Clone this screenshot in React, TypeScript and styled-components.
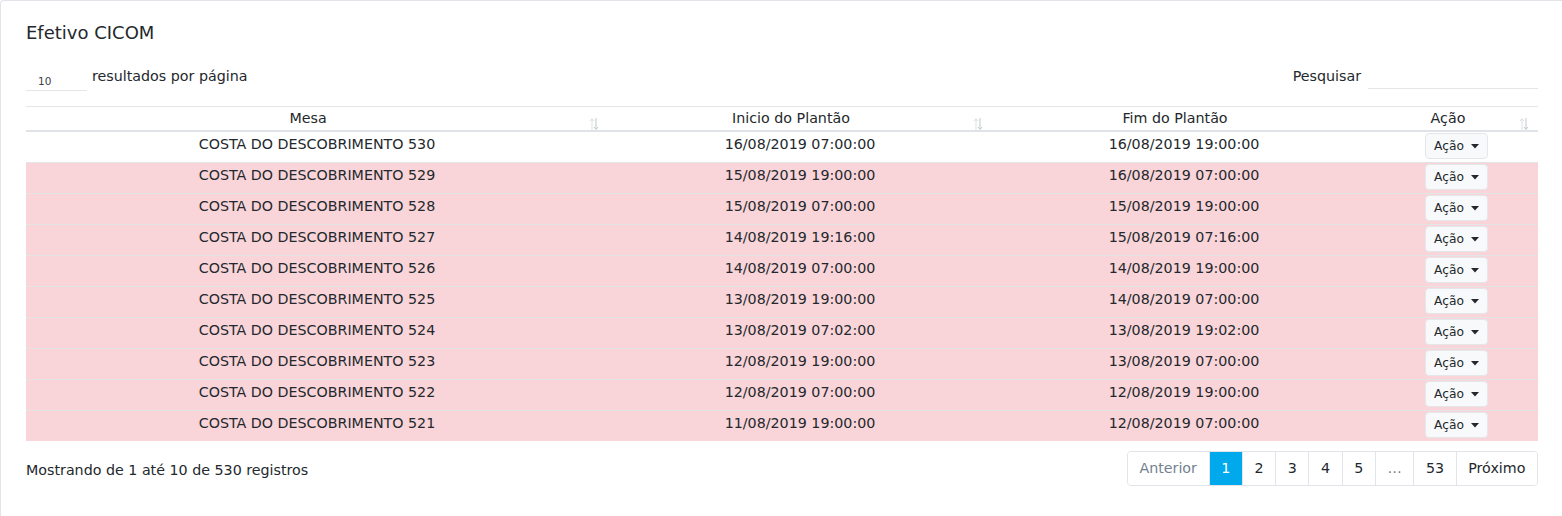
import React from "react"
import styled, { createGlobalStyle } from "styled-components"

const GlobalStyle = createGlobalStyle`
  html, body {
    margin: 0;
    padding: 0;
    background: #ffffff;
  }
  body {
    font-family: "DejaVu Sans", Verdana, sans-serif;
    font-size: 14.25px;
    color: #23282c;
  }
`

type Row = { mesa: string; inicio: string; fim: string }

const rows: Array<Row> = [
  { mesa: "COSTA DO DESCOBRIMENTO 530", inicio: "16/08/2019 07:00:00", fim: "16/08/2019 19:00:00" },
  { mesa: "COSTA DO DESCOBRIMENTO 529", inicio: "15/08/2019 19:00:00", fim: "16/08/2019 07:00:00" },
  { mesa: "COSTA DO DESCOBRIMENTO 528", inicio: "15/08/2019 07:00:00", fim: "15/08/2019 19:00:00" },
  { mesa: "COSTA DO DESCOBRIMENTO 527", inicio: "14/08/2019 19:16:00", fim: "15/08/2019 07:16:00" },
  { mesa: "COSTA DO DESCOBRIMENTO 526", inicio: "14/08/2019 07:00:00", fim: "14/08/2019 19:00:00" },
  { mesa: "COSTA DO DESCOBRIMENTO 525", inicio: "13/08/2019 19:00:00", fim: "14/08/2019 07:00:00" },
  { mesa: "COSTA DO DESCOBRIMENTO 524", inicio: "13/08/2019 07:02:00", fim: "13/08/2019 19:02:00" },
  { mesa: "COSTA DO DESCOBRIMENTO 523", inicio: "12/08/2019 19:00:00", fim: "13/08/2019 07:00:00" },
  { mesa: "COSTA DO DESCOBRIMENTO 522", inicio: "12/08/2019 07:00:00", fim: "12/08/2019 19:00:00" },
  { mesa: "COSTA DO DESCOBRIMENTO 521", inicio: "11/08/2019 19:00:00", fim: "12/08/2019 07:00:00" },
]

const headers = [
  { label: "Mesa", sort: true },
  { label: "Inicio do Plantão", sort: true },
  { label: "Fim do Plantão", sort: false },
  { label: "Ação", sort: true },
]

const pages = ["1", "2", "3", "4", "5", "…", "53"]

const SortIcon = () => (
  <SortSvg width="10" height="14" viewBox="0 0 10 14">
    <path d="M3 13V2M1 4l2-2.5L5 4" stroke="#dcdfe3" strokeWidth="1" fill="none" />
    <path d="M7 1v11M5 10l2 2.5L9 10" stroke="#c3c8cd" strokeWidth="1" fill="none" />
  </SortSvg>
)

const Caret = () => (
  <svg width="8" height="5" viewBox="0 0 8 5">
    <path d="M0 0h8L4 4.5z" fill="#23282c" />
  </svg>
)

export default function App() {
  return (
    <>
      <GlobalStyle />
      <Card>
        <Title>Efetivo CICOM</Title>
        <Controls>
          <LengthBox>
            <LengthSelect>10</LengthSelect>
            <span>resultados por página</span>
          </LengthBox>
          <SearchBox>
            <span>Pesquisar</span>
            <SearchInput />
          </SearchBox>
        </Controls>
        <Table>
          <colgroup>
            <col style={{ width: 582 }} />
            <col style={{ width: 384 }} />
            <col style={{ width: 384 }} />
            <col style={{ width: 162 }} />
          </colgroup>
          <thead>
            <tr>
              {headers.map((h) => (
                <HeadCell key={h.label}>
                  {h.label}
                  {h.sort && <SortIcon />}
                </HeadCell>
              ))}
            </tr>
          </thead>
          <tbody>
            {rows.map((r, i) => (
              <BodyRow key={r.mesa} $danger={i > 0}>
                <Cell>{r.mesa}</Cell>
                <Cell>{r.inicio}</Cell>
                <Cell>{r.fim}</Cell>
                <Cell>
                  <ActionButton>
                    Ação <Caret />
                  </ActionButton>
                </Cell>
              </BodyRow>
            ))}
          </tbody>
        </Table>
        <Footer>
          <Info>Mostrando de 1 até 10 de 530 registros</Info>
          <Pagination>
            <PageItem $muted>Anterior</PageItem>
            {pages.map((p) => (
              <PageItem key={p} $active={p === "1"} $muted={p === "…"}>
                {p}
              </PageItem>
            ))}
            <PageItem>Próximo</PageItem>
          </Pagination>
        </Footer>
      </Card>
    </>
  )
}

const Card = styled.div`
  border: 1px solid #e1e4e8;
  border-right: none;
  border-bottom: none;
  border-radius: 4px 0 0 0;
  padding: 18px 24px 40px 25px;
  min-height: 516px;
  box-sizing: border-box;
`
const Title = styled.div`
  font-size: 18px;
  line-height: 27px;
  margin-bottom: 15px;
`
const Controls = styled.div`
  display: flex;
  justify-content: space-between;
  align-items: flex-start;
  height: 45px;
`
const LengthBox = styled.div`
  display: flex;
  align-items: center;
  gap: 5px;
  line-height: 21px;
  padding-top: 1px;
`
const LengthSelect = styled.div`
  width: 61px;
  height: 29px;
  box-sizing: border-box;
  border-bottom: 1px solid #e4e7ea;
  font-size: 10.5px;
  padding: 9px 0 0 12px;
  color: #3a4248;
`
const SearchBox = styled.div`
  display: flex;
  align-items: flex-start;
  gap: 7px;
  line-height: 21px;
  padding-top: 5px;
`
const SearchInput = styled.div`
  width: 170px;
  height: 22px;
  border-bottom: 1px solid #e4e7ea;
`
const Table = styled.table`
  width: 100%;
  table-layout: fixed;
  border-collapse: collapse;
  text-align: center;
`
const HeadCell = styled.th`
  position: relative;
  font-weight: normal;
  line-height: 21px;
  padding: 1px 22px 1px 4px;
  border-top: 1px solid #e4e7ea;
  border-bottom: 2px solid #dfe2e6;
`
const SortSvg = styled.svg`
  position: absolute;
  right: 9px;
  bottom: -1px;
`
const BodyRow = styled.tr<{ $danger?: boolean }>`
  background: ${({ $danger }) => ($danger ? "#f9d5d9" : "#ffffff")};
  & + & {
    border-top: 1px solid #e4e3e6;
  }
`
const Cell = styled.td`
  vertical-align: top;
  line-height: 21px;
  padding: 2px 4px 2px;
  height: 26px;
`
const ActionButton = styled.button`
  display: inline-flex;
  align-items: center;
  gap: 7px;
  height: 26px;
  margin-top: -1px;
  padding: 0 8px;
  font-family: inherit;
  font-size: 12.25px;
  color: #23282c;
  background: #f8f9fa;
  border: 1px solid #e4e7ea;
  border-radius: 4px;
  margin-right: 1px;
`
const Footer = styled.div`
  display: flex;
  justify-content: space-between;
  align-items: center;
  margin-top: 10px;
`
const Info = styled.div`
  line-height: 21px;
  padding-top: 3px;
`
const Pagination = styled.div`
  display: flex;
  border: 1px solid #e1e4e8;
  border-radius: 4px;
  overflow: hidden;
`
const PageItem = styled.div<{ $active?: boolean; $muted?: boolean }>`
  height: 33px;
  line-height: 33px;
  padding: 0 11.6px;
  min-width: 9px;
  text-align: center;
  color: ${({ $active, $muted }) => ($active ? "#ffffff" : $muted ? "#73818f" : "#23282c")};
  background: ${({ $active }) => ($active ? "#00a8ec" : "#ffffff")};
  & + & {
    border-left: 1px solid #e1e4e8;
  }
`
